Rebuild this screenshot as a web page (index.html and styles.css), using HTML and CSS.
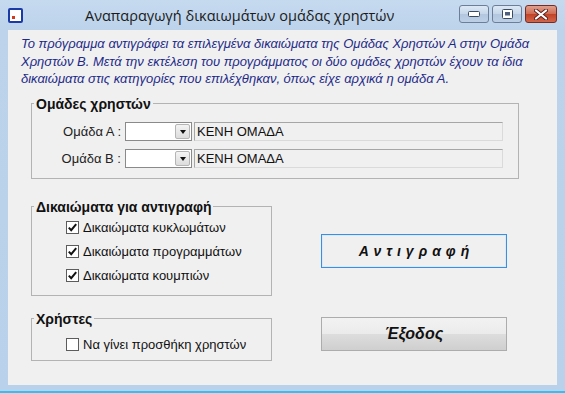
FILE: index.html
```html
<!DOCTYPE html>
<html lang="el">
<head>
  <meta charset="UTF-8">
  <meta name="viewport" content="width=device-width, initial-scale=1.0">
  <title>Αναπαραγωγή δικαιωμάτων ομάδας χρηστών</title>
  <link rel="stylesheet" href="styles.css">
</head>
<body>
  <div class="window">
    <div class="titlebar">
      <span class="app-icon"><span class="app-dot"></span></span>
      <span class="title">Αναπαραγωγή δικαιωμάτων ομάδας χρηστών</span>
      <div class="controls">
        <span class="ctl">
          <svg width="12" height="6" viewBox="0 0 12 6"><rect x="0.5" y="0.5" width="11" height="5" rx="1" fill="#fff" stroke="#3a4a63"/></svg>
        </span>
        <span class="ctl">
          <svg width="11" height="10" viewBox="0 0 11 10"><rect x="0.5" y="0.5" width="10" height="9" rx="1" fill="#fff" stroke="#3a4a63"/><rect x="3" y="3" width="5" height="3.5" fill="#4d5f7c"/></svg>
        </span>
        <span class="ctl close">
          <svg width="14" height="11" viewBox="0 0 14 11"><path d="M2 1.5 L12 9.5 M12 1.5 L2 9.5" stroke="#5a2020" stroke-width="4" stroke-linecap="round"/><path d="M2 1.5 L12 9.5 M12 1.5 L2 9.5" stroke="#fff" stroke-width="2.2" stroke-linecap="round"/></svg>
        </span>
      </div>
    </div>

    <div class="client">
      <p class="intro">Το πρόγραμμα αντιγράφει τα επιλεγμένα δικαιώματα της Ομάδας Χρηστών Α στην Ομάδα Χρηστών Β. Μετά την εκτέλεση του προγράμματος οι δύο ομάδες χρηστών έχουν τα ίδια δικαιώματα στις κατηγορίες που επιλέχθηκαν, όπως είχε αρχικά η ομάδα Α.</p>

      <fieldset class="group group-teams">
        <legend>Ομάδες χρηστών</legend>
        <div class="team-row">
          <label class="team-label">Ομάδα Α :</label>
          <span class="combo"><span class="combo-btn"><span class="arrow-down"></span></span></span>
          <span class="team-name">ΚΕΝΗ ΟΜΑΔΑ</span>
        </div>
        <div class="team-row">
          <label class="team-label">Ομάδα Β :</label>
          <span class="combo"><span class="combo-btn"><span class="arrow-down"></span></span></span>
          <span class="team-name">ΚΕΝΗ ΟΜΑΔΑ</span>
        </div>
      </fieldset>

      <div class="lower">
        <div class="left-col">
          <fieldset class="group group-rights">
            <legend>Δικαιώματα για αντιγραφή</legend>
            <div class="check-row">
              <span class="check checked"><svg width="11" height="11" viewBox="0 0 11 11"><path d="M1.8 5.6 L4.2 8.2 L9.2 2.2" fill="none" stroke="#111" stroke-width="2"/></svg></span>
              <span>Δικαιώματα κυκλωμάτων</span>
            </div>
            <div class="check-row">
              <span class="check checked"><svg width="11" height="11" viewBox="0 0 11 11"><path d="M1.8 5.6 L4.2 8.2 L9.2 2.2" fill="none" stroke="#111" stroke-width="2"/></svg></span>
              <span>Δικαιώματα προγραμμάτων</span>
            </div>
            <div class="check-row">
              <span class="check checked"><svg width="11" height="11" viewBox="0 0 11 11"><path d="M1.8 5.6 L4.2 8.2 L9.2 2.2" fill="none" stroke="#111" stroke-width="2"/></svg></span>
              <span>Δικαιώματα κουμπιών</span>
            </div>
          </fieldset>

          <fieldset class="group group-users">
            <legend>Χρήστες</legend>
            <div class="check-row">
              <span class="check"></span>
              <span>Να γίνει προσθήκη χρηστών</span>
            </div>
          </fieldset>
        </div>

        <div class="right-col">
          <button class="btn btn-default">Αντιγραφή</button>
          <button class="btn btn-exit">Έξοδος</button>
        </div>
      </div>
    </div>
  </div>
</body>
</html>
```

FILE: styles.css
```css
body {
  margin: 0;
  background-color: #b9d1ea;
  font-family: 'Liberation Sans', Arial, sans-serif;
  font-size: 13px;
  color: #000;
}
.window {
  display: flex;
  flex-direction: column;
  width: 565px;
  height: 393px;
  background: linear-gradient(to bottom, #c6daef 0px, #bcd3eb 30px, #b9d1ea 100%);
  border-bottom: 2px solid #33bff0;
  box-sizing: border-box;
}
.titlebar {
  display: flex;
  align-items: center;
  height: 30px;
  padding: 0 8px;
}
.app-icon {
  position: relative;
  width: 11px;
  height: 11px;
  border: 2px solid #1a3aa8;
  border-radius: 2px;
  background-color: #fff;
}
.app-dot {
  position: absolute;
  left: 2px;
  bottom: 2px;
  width: 3px;
  height: 3px;
  background-color: #d43a1a;
}
.title {
  flex: 1;
  margin-left: 62px;
  font-family: 'Open Sans', 'Noto Sans', sans-serif;
  font-size: 14.5px;
  color: #1b1b1b;
  white-space: nowrap;
}
.controls {
  display: flex;
  align-self: flex-start;
  gap: 3px;
  margin-top: 5px;
  margin-right: 0;
}
.ctl {
  display: flex;
  align-items: center;
  justify-content: center;
  width: 28px;
  height: 16px;
  border: 1px solid #6d7f98;
  border-radius: 3px;
  background: linear-gradient(to bottom, #dde8f4 0%, #c5d6ea 50%, #b2c7df 51%, #bccfe5 100%);
}
.ctl.close {
  width: 30px;
  border-color: #7a2a22;
  background: linear-gradient(to bottom, #e0a08c 0%, #cf6a52 50%, #c04226 51%, #d2654a 100%);
}
.client {
  height: 355px;
  margin: 0 8px;
  background-color: #f0f0f0;
}
.intro {
  margin: 0;
  padding: 5px 10px 0 13px;
  font-style: italic;
  line-height: 17.5px;
  color: #1d2a88;
}
.group {
  margin: 0;
  padding: 0;
  border: 1px solid #b3b3b3;
  min-width: 0;
}
.group legend {
  margin-left: 2px;
  padding: 0 2px;
  font-size: 14px;
  font-weight: bold;
  line-height: 16px;
  color: #111;
}
.group-teams {
  margin: 8px 38px 0 23px;
  padding: 10px 0 10px 0;
}
.team-row {
  display: flex;
  align-items: center;
  height: 19px;
}
.team-row + .team-row {
  margin-top: 8px;
}
.team-label {
  width: 89px;
  margin-right: 4px;
  text-align: right;
  color: #222;
}
.combo {
  display: flex;
  justify-content: flex-end;
  align-items: center;
  width: 65px;
  height: 17px;
  margin-right: 2px;
  border: 1px solid #8a8a8a;
  background-color: #fff;
}
.combo-btn {
  display: flex;
  align-items: center;
  justify-content: center;
  width: 15px;
  height: 15px;
  margin-right: 1px;
  border: 1px solid #b5b5b5;
  border-radius: 2px;
  background: linear-gradient(to bottom, #f4f4f4, #dcdcdc);
  box-sizing: border-box;
}
.arrow-down {
  width: 0;
  height: 0;
  margin-top: 2px;
  border-left: 3.5px solid transparent;
  border-right: 3.5px solid transparent;
  border-top: 4px solid #111;
}
.team-name {
  width: 305px;
  height: 17px;
  padding-left: 2px;
  border: 1px solid #a6a6a6;
  border-right-color: #dadada;
  border-bottom-color: #dadada;
  background-color: #f0f0f0;
  line-height: 17px;
  color: #111;
}
.lower {
  display: flex;
  margin-top: 20px;
  margin-left: 23px;
}
.left-col {
  display: flex;
  flex-direction: column;
  width: 241px;
}
.group-rights {
  padding: 1px 0 7px 0;
}
.group-users {
  margin-top: 15px;
  padding: 10px 0 7px 0;
}
.check-row {
  display: flex;
  align-items: center;
  gap: 4px;
  height: 24px;
  padding-left: 34px;
  color: #111;
}
.group-users .check-row {
  height: 16px;
}
.check {
  display: flex;
  align-items: center;
  justify-content: center;
  width: 11px;
  height: 11px;
  border: 1px solid #5c5c5c;
  background-color: #fff;
}
.right-col {
  display: flex;
  flex-direction: column;
  gap: 49px;
  padding: 35px 0 0 49px;
}
.btn {
  width: 186px;
  height: 34px;
  padding: 0;
  border: 1px solid #acacac;
  border-radius: 0;
  font-family: 'Liberation Sans', Arial, sans-serif;
  font-weight: bold;
  font-style: italic;
  color: #111;
  background: linear-gradient(to bottom, #f2f2f2 0%, #ebebeb 50%, #dddddd 51%, #cfcfcf 100%);
}
.btn-default {
  border-color: #3c8ee0;
  background: linear-gradient(to bottom, #f0f0f0, #f0f0f0);
  box-shadow: inset 0 0 0 1px #d9eaf9;
  font-size: 14px;
  letter-spacing: 5px;
  padding-left: 5px;
}
.btn-exit {
  font-size: 16px;
}
```
